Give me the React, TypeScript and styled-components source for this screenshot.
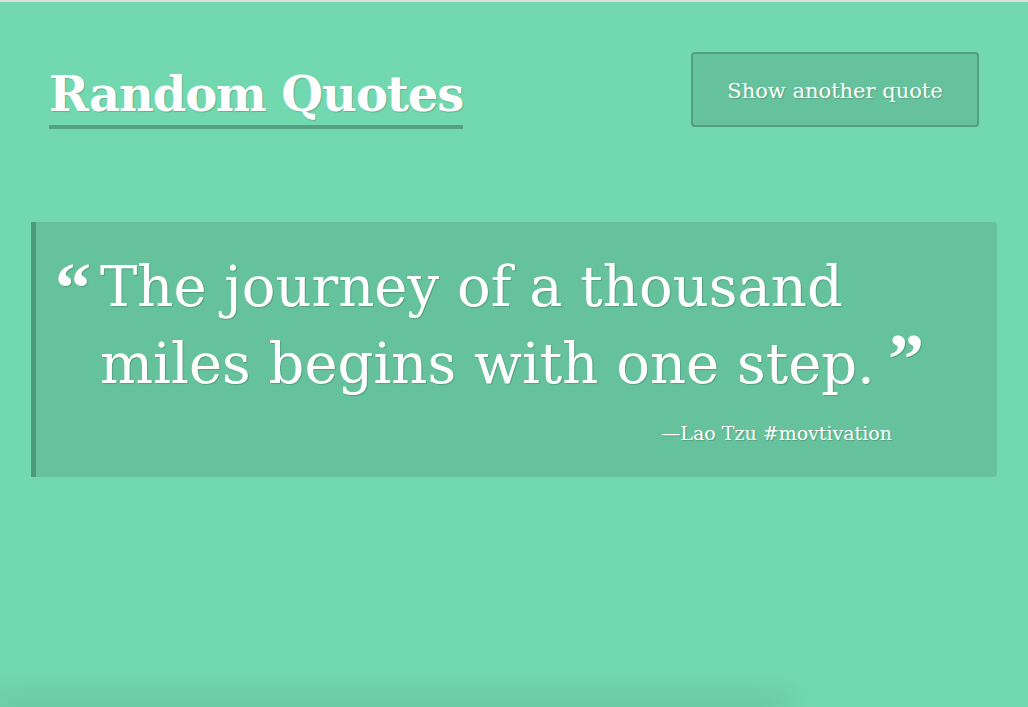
import React from 'react';
import styled, { createGlobalStyle } from 'styled-components';

const GlobalStyle = createGlobalStyle`
  html, body {
    margin: 0;
    padding: 0;
    background: #72d8af;
  }
  body {
    border-top: 2px solid #dedede;
    font-family: "DejaVu Serif", "Liberation Serif", serif;
    color: #fff;
  }
`;

const Page = styled.div`
  height: 705px;
  overflow: hidden;
  display: flex;
  flex-direction: column;
`;

const Header = styled.header`
  display: flex;
  justify-content: space-between;
  align-items: flex-start;
  padding: 50px 49px 0 49px;
`;

const Title = styled.h1`
  margin: 14px 0 0 0;
  font-size: 48px;
  font-weight: bold;
  line-height: 56px;
  padding-bottom: 3px;
  border-bottom: 4px solid #54a183;
  text-shadow: 1px 1px 1px rgba(0, 0, 0, 0.18);
  letter-spacing: -1.1px;
`;

const QuoteButton = styled.button`
  width: 288px;
  height: 75px;
  padding-top: 3px;
  background: #65c29c;
  border: 2px solid #53a080;
  border-radius: 4px;
  color: #fff;
  font-family: inherit;
  font-size: 21px;
  text-shadow: 1px 1px 1px rgba(0, 0, 0, 0.18);
  cursor: pointer;
`;

const Panel = styled.blockquote`
  margin: 93px 31px 0 31px;
  height: 255px;
  box-sizing: border-box;
  background: #65c29c;
  border-left: 5px solid #4d9a7a;
  border-radius: 0 4px 4px 0;
  padding: 26px 50px 0 19px;
`;

const QuoteText = styled.p`
  margin: 0;
  display: flex;
  font-size: 56px;
  line-height: 77px;
  text-shadow: 1px 1px 1px rgba(0, 0, 0, 0.18);
`;

const Mark = styled.span`
  font-family: "Liberation Serif", serif;
  font-size: 72px;
  font-weight: bold;
  line-height: 80px;
  margin-right: 9px;
  flex: none;
`;

const CloseMark = styled.span`
  font-family: "Liberation Serif", serif;
  font-size: 72px;
  font-weight: bold;
  line-height: 0;
  margin-left: 13px;
`;

const Author = styled.div`
  text-align: right;
  font-size: 19px;
  margin-top: 20px;
  padding-right: 55px;
  text-shadow: 1px 1px 1px rgba(0, 0, 0, 0.18);
`;

const Shade = styled.div`
  margin-top: auto;
  width: 780px;
  height: 0;
  box-shadow: 0 0 30px 8px rgba(0, 60, 40, 0.18);
`;

export default function App() {
  return (
    <Page>
      <GlobalStyle />
      <Header>
        <Title>Random Quotes</Title>
        <QuoteButton>Show another quote</QuoteButton>
      </Header>
      <Panel>
        <QuoteText>
          <Mark>“</Mark>
          <span>
            The journey of a thousand miles begins with one step.
            <CloseMark>”</CloseMark>
          </span>
        </QuoteText>
        <Author>—Lao Tzu #movtivation</Author>
      </Panel>
      <Shade />
    </Page>
  );
}
